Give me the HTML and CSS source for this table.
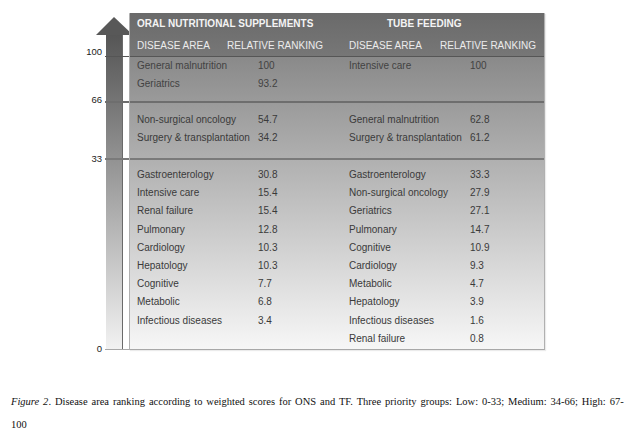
FILE: index.html
```html
<!DOCTYPE html>
<html>
<head>
<meta charset="utf-8">
<link rel="stylesheet" href="styles.css">
</head>
<body>
<div class="chart">
  <div class="axis">
    <svg class="arrow" width="37" height="332" viewBox="0 0 37 332">
      <defs>
        <linearGradient id="shaft" x1="0" y1="0" x2="0" y2="332" gradientUnits="userSpaceOnUse">
          <stop offset="0" stop-color="#4e4e4e"/>
          <stop offset="0.2" stop-color="#6c6c6c"/>
          <stop offset="1" stop-color="#f2f2f2"/>
        </linearGradient>
      </defs>
      <polygon points="18,0 37,18 0,18" fill="#585858"/>
      <rect x="10" y="18" width="16" height="314" fill="url(#shaft)"/>
      <rect x="26" y="18" width="1" height="314" fill="#6a6a6a"/>
    </svg>
    <span class="tick t100"></span>
    <span class="tick t66"></span>
    <span class="tick t33"></span>
    <span class="tick t0"></span>
    <span class="lbl l100">100</span>
    <span class="lbl l66">66</span>
    <span class="lbl l33">33</span>
    <span class="lbl l0">0</span>
  </div>
  <div class="table">
    <div class="head">
      <div class="title-row">
        <span>ORAL NUTRITIONAL SUPPLEMENTS</span>
        <span>TUBE FEEDING</span>
      </div>
      <div class="col-row">
        <span>DISEASE AREA</span>
        <span>RELATIVE RANKING</span>
        <span>DISEASE AREA</span>
        <span>RELATIVE RANKING</span>
      </div>
    </div>
    <div class="band high">
      <div class="row"><span>General malnutrition</span><span>100</span><span>Intensive care</span><span>100</span></div>
      <div class="row"><span>Geriatrics</span><span>93.2</span><span></span><span></span></div>
    </div>
    <div class="band medium">
      <div class="row"><span>Non-surgical oncology</span><span>54.7</span><span>General malnutrition</span><span>62.8</span></div>
      <div class="row"><span>Surgery &amp; transplantation</span><span>34.2</span><span>Surgery &amp; transplantation</span><span>61.2</span></div>
    </div>
    <div class="band low">
      <div class="row"><span>Gastroenterology</span><span>30.8</span><span>Gastroenterology</span><span>33.3</span></div>
      <div class="row"><span>Intensive care</span><span>15.4</span><span>Non-surgical oncology</span><span>27.9</span></div>
      <div class="row"><span>Renal failure</span><span>15.4</span><span>Geriatrics</span><span>27.1</span></div>
      <div class="row"><span>Pulmonary</span><span>12.8</span><span>Pulmonary</span><span>14.7</span></div>
      <div class="row"><span>Cardiology</span><span>10.3</span><span>Cognitive</span><span>10.9</span></div>
      <div class="row"><span>Hepatology</span><span>10.3</span><span>Cardiology</span><span>9.3</span></div>
      <div class="row"><span>Cognitive</span><span>7.7</span><span>Metabolic</span><span>4.7</span></div>
      <div class="row"><span>Metabolic</span><span>6.8</span><span>Hepatology</span><span>3.9</span></div>
      <div class="row"><span>Infectious diseases</span><span>3.4</span><span>Infectious diseases</span><span>1.6</span></div>
      <div class="row"><span></span><span></span><span>Renal failure</span><span>0.8</span></div>
    </div>
  </div>
</div>
<p class="caption"><em>Figure 2</em>. Disease area ranking according to weighted scores for ONS and TF. Three priority groups: Low: 0-33; Medium: 34-66; High: 67-<br>100</p>
</body>
</html>
```
FILE: styles.css
```css
html, body {
  margin: 0;
  padding: 0;
  background: #ffffff;
}
body {
  font-family: "Liberation Sans", Arial, sans-serif;
}
.chart {
  display: flex;
  margin-left: 80px;
  padding-top: 13px;
}
.axis {
  position: relative;
  width: 49px;
  height: 337px;
  flex: none;
}
.arrow {
  position: absolute;
  left: 16px;
  top: 4px;
  display: block;
}
.tick {
  position: absolute;
  left: 25px;
  width: 24px;
  background: #666666;
}
.t100 { top: 43px; height: 1px; background: #555555; }
.t66 { top: 88px; height: 2px; background: #6e6e6e; }
.t33 { top: 145px; height: 2px; background: #7a7a7a; }
.t0 { top: 336px; height: 1px; background: #a8a8a8; }
.lbl {
  position: absolute;
  right: 27px;
  font-size: 9.5px;
  line-height: 10px;
  color: #1a1a1a;
}
.l100 { top: 34px; }
.l66 { top: 82px; }
.l33 { top: 141px; }
.l0 { top: 331px; }

.table {
  position: relative;
  z-index: 1;
  width: 416px;
  box-sizing: border-box;
  border: 1px solid #b0b0b0;
  border-top-color: #c8c8c8;
  border-bottom-color: #a8a8a8;
  box-shadow: 1px 1px 1px rgba(0,0,0,0.08);
  background: linear-gradient(to bottom, #868686 0px, #8a8a8a 44px, #f7f7f7 336px);
  font-size: 10px;
  color: #3a3a3a;
}
.head {
  background: linear-gradient(to bottom, #6a6a6a, #777777);
  margin-top: -1px;
}
.title-row {
  display: grid;
  grid-template-columns: 250px auto;
  padding-left: 7px;
  height: 20px;
  line-height: 21px;
  font-weight: bold;
  color: #f4f4f4;
}
.col-row {
  display: grid;
  grid-template-columns: 90px 122px 91px auto;
  padding-left: 7px;
  padding-top: 2px;
  height: 21px;
  line-height: 21px;
  color: #ececec;
  border-bottom: 1px solid #565656;
}
.band {
  box-sizing: border-box;
}
.high {
  height: 46px;
  border-bottom: 2px solid #6e6e6e;
}
.medium {
  height: 57px;
  padding-top: 8px;
  border-bottom: 2px solid #7a7a7a;
}
.low {
  height: 188px;
  padding-top: 6px;
}
.row {
  display: grid;
  grid-template-columns: 121px 91px 121px auto;
  padding-left: 7px;
  height: 18.2px;
  line-height: 18px;
  white-space: nowrap;
}
.high .row { color: #424242; }

.caption {
  margin: 40px 0 0 0;
  padding-left: 11px;
  font-family: "Liberation Serif", "Times New Roman", serif;
  font-size: 10.5px;
  word-spacing: 1.3px;
  line-height: 23px;
  color: #111111;
  white-space: nowrap;
}
```
